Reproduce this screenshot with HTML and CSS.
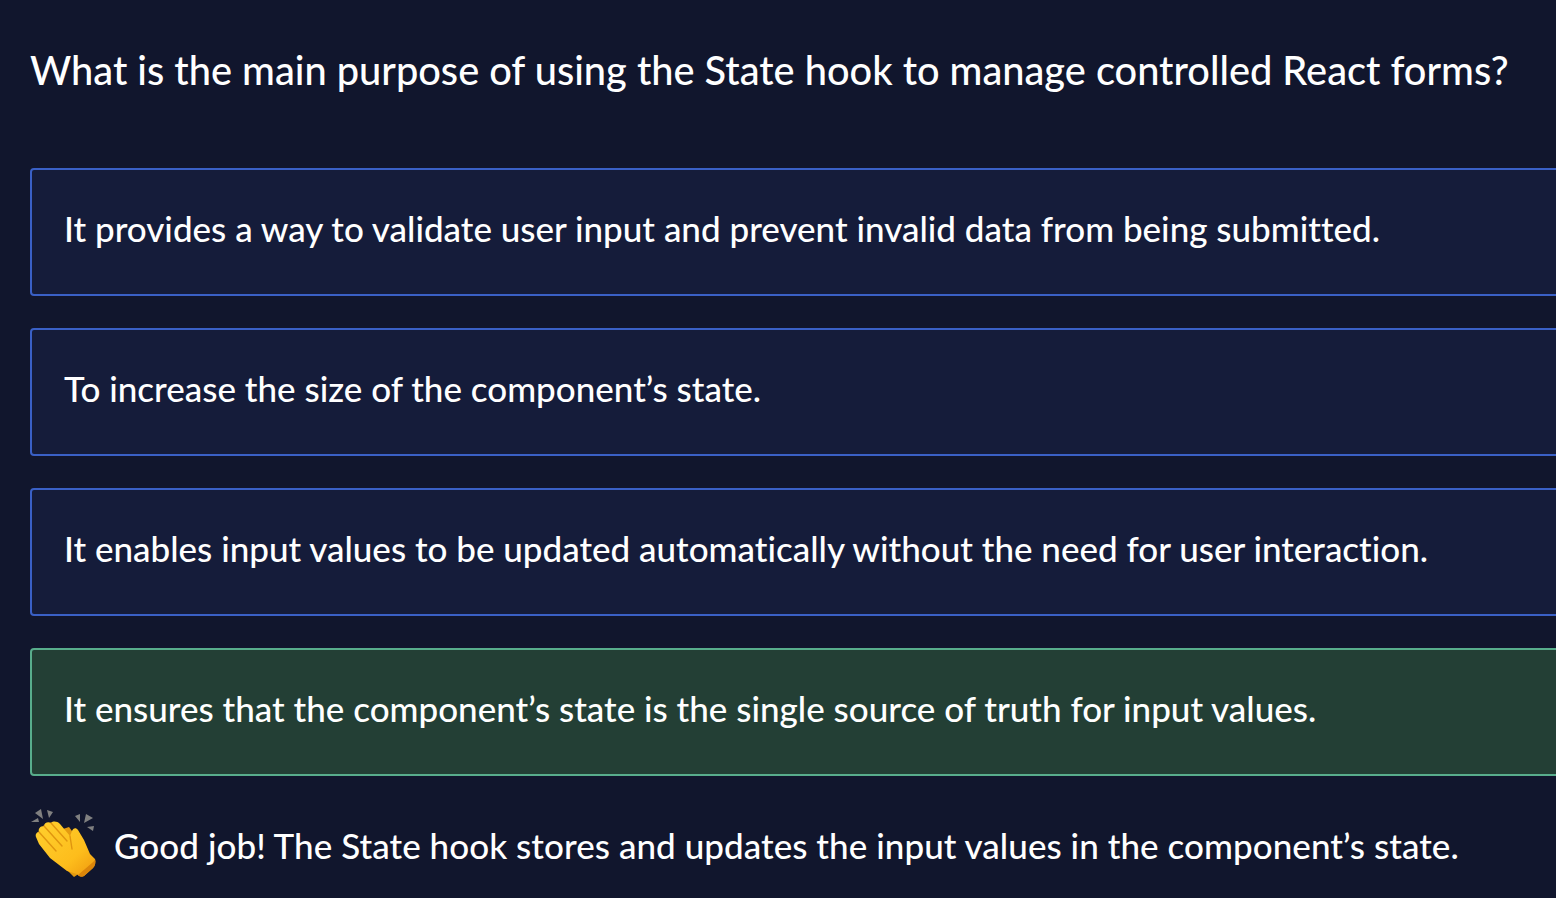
FILE: index.html
```html
<!DOCTYPE html>
<html>
<head>
	<meta charset="UTF-8" />
	<title>Quiz</title>
	<link rel="stylesheet" href="styles.css">
</head>
<body>
	<div class="quiz">
		<h1 class="question">What is the main purpose of using the State hook to manage controlled React forms?</h1>
		<div class="answers">
			<div class="answer">It provides a way to validate user input and prevent invalid data from being submitted.</div>
			<div class="answer">To increase the size of the component’s state.</div>
			<div class="answer">It enables input values to be updated automatically without the need for user interaction.</div>
			<div class="answer correct">It ensures that the component’s state is the single source of truth for input values.</div>
		</div>
		<div class="feedback">
			<svg class="clap" viewBox="0 0 68 72" width="68" height="72">
				<defs>
					<linearGradient id="skin" x1="0" y1="0" x2="1" y2="1">
						<stop offset="0" stop-color="#ffd02e"/>
						<stop offset="0.65" stop-color="#fdbd1c"/>
						<stop offset="1" stop-color="#ee970d"/>
					</linearGradient>
				</defs>
				<!-- sparks -->
				<path d="M1 15l7-4 1 4z M5 6l6-4 2 10z M17 3l6 2-4 6z" fill="#808080"/>
				<path d="M45 9l5-2 0 8z M54 16l2-9 7 4z M57 20l7-1-1 5z" fill="#808080"/>
				<!-- back hand -->
				<path d="M33 22l6-2 6 8-6 6z M30 56l14 14 6-4-12-12z" fill="#e39a10"/>
				<!-- front hand -->
				<path d="M6 30c-1-3 1-5 3-5c-1-3 1-6 5-6c0-3 4-5 7-3c2-2 6-2 9 1L40 29l2-5c1-3 4-4 6-1L54 33l6 14 5 5c1 3 0 7-2 9L54 69c-2 1-5 1-7-2L37 64 20 51 9 37z" fill="url(#skin)"/>
				<!-- finger gaps -->
				<path d="M9 25L26 44M14 19L32 39M21 16L37 34M40 29L42 42" fill="none" stroke="#e0950f" stroke-width="1.4" stroke-linecap="round"/>
				<!-- wrist shade -->
				<path d="M48 68l14-12c2-2 3-3 3-4 1 3 0 7-2 9L54 69c-2 1-4 1-6-1z" fill="#dc860a"/>
			</svg>
			<span class="feedback-text">Good job! The State hook stores and updates the input values in the component’s state.</span>
		</div>
	</div>
</body>
</html>
```

FILE: styles.css
```css
html, body {
	height: 100%;
}
body {
	margin: 0;
	overflow: hidden;
	background-color: #11162d;
	color: #ffffff;
	font-family: "Lato", "Liberation Sans", sans-serif;
	font-variant-ligatures: none;
}
.quiz {
	width: 1640px;
	padding: 43px 0 0 30px;
}
.question {
	margin: 0 0 71px 0;
	height: 54px;
	line-height: 54px;
	font-size: 39.75px;
	font-weight: 500;
	white-space: nowrap;
}
.answers {
	display: flex;
	flex-direction: column;
	gap: 32px;
}
.answer {
	box-sizing: border-box;
	height: 128px;
	padding: 0 32px 9px;
	display: flex;
	align-items: center;
	background-color: #151c3a;
	border: 2px solid #3a60c6;
	border-radius: 4px;
	font-size: 35px;
	font-weight: 500;
}
.correct {
	background-color: #233f35;
	border-color: #58ad8c;
}
.feedback {
	display: flex;
	align-items: center;
	gap: 16px;
	margin-top: 31px;
}
.clap {
	flex: none;
}
.feedback-text {
	font-size: 35px;
	font-weight: 500;
	white-space: nowrap;
	letter-spacing: 0.05px;
	padding-top: 4px;
}
```
